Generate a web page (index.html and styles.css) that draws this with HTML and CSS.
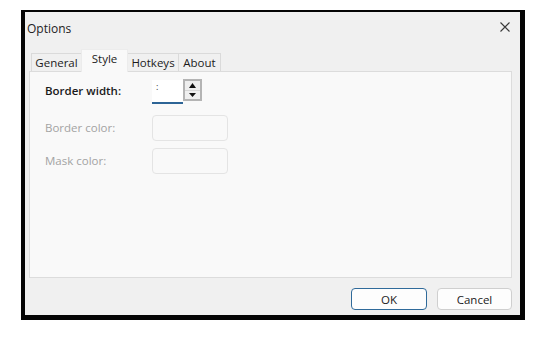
FILE: index.html
```html
<!DOCTYPE html>
<html>
<head>
<meta charset="utf-8">
<link rel="stylesheet" href="styles.css">
</head>
<body>
<div class="window">
  <div class="inner">
    <div class="titlebar">
      <span class="title">Options</span>
      <svg class="close" width="10" height="10" viewBox="0 0 10 10"><path d="M0.5 0.5 L9.5 9.5 M9.5 0.5 L0.5 9.5" stroke="#3a3a3a" stroke-width="1.1" fill="none"/></svg>
    </div>
    <div class="tabs">
      <div class="tab t-general">General</div>
      <div class="tab active t-style">Style</div>
      <div class="tab t-hotkeys">Hotkeys</div>
      <div class="tab t-about">About</div>
    </div>
    <div class="panel">
      <div class="form">
        <div class="label strong">Border width:</div>
        <div class="spinner">
          <div class="spin-text">:</div>
          <div class="spin-btns">
            <div class="spin-btn"><svg width="7" height="5" viewBox="0 0 7 5"><path d="M3.5 0 L7 5 L0 5 Z" fill="#111"/></svg></div>
            <div class="spin-btn"><svg width="7" height="4" viewBox="0 0 7 4"><path d="M0 0 L7 0 L3.5 4 Z" fill="#111"/></svg></div>
          </div>
        </div>
        <div class="label dim">Border color:</div>
        <div class="colorbox"></div>
        <div class="label dim">Mask color:</div>
        <div class="colorbox"></div>
      </div>
    </div>
    <div class="footer">
      <button class="btn primary">OK</button>
      <button class="btn">Cancel</button>
    </div>
  </div>
</div>
</body>
</html>
```
FILE: styles.css
```css
html, body {
  margin: 0;
  padding: 0;
  background: #ffffff;
  font-family: "Open Sans", "Noto Sans", sans-serif;
  font-size: 11px;
  color: #1b1b1b;
}
.window {
  margin: 10px 0 0 21px;
  width: 504px;
  height: 310px;
  box-sizing: border-box;
  background: #050505;
  padding: 2px 5px 5px 4px;
}
.inner {
  background: #f0f0f0;
  height: 100%;
  display: flex;
  flex-direction: column;
  padding: 0 8px 0 4px;
  box-sizing: border-box;
}
.titlebar {
  height: 37px;
  display: flex;
  align-items: flex-start;
  justify-content: space-between;
  box-sizing: border-box;
  padding-top: 9px;
  margin-left: -2px;
}
.title {
  font-size: 12px;
  color: #222;
  line-height: 16px;
}
.close {
  margin-top: 1px;
  margin-right: 2px;
}
.tabs {
  height: 22px;
  display: flex;
  align-items: flex-end;
  padding-left: 2px;
}
.tab {
  height: 18px;
  box-sizing: border-box;
  border: 1px solid #dadada;
  border-bottom: none;
  background: #f0f0f0;
  line-height: 17px;
  text-align: center;
  font-size: 11.5px;
  color: #1b1b1b;
  margin-right: -1px;
}
.tab.active {
  height: 23px;
  margin-bottom: -1px;
  background: #f9f9f9;
  border-color: #ececec;
  line-height: 18px;
  position: relative;
  z-index: 1;
  padding-bottom: 4px;
}
.t-general { width: 51px; }
.t-style { width: 47px; }
.t-hotkeys { width: 52px; }
.t-about { width: 43px; }
.panel {
  height: 207px;
  box-sizing: border-box;
  background: #f9f9f9;
  border: 1px solid #dcdcdc;
  padding: 6px 0 0 15px;
}
.form {
  display: grid;
  grid-template-columns: 107px auto;
  grid-template-rows: 26px 37px 33px;
  align-items: end;
}
.label {
  font-size: 11.5px;
  height: 26px;
  line-height: 26px;
}
.label.strong {
  font-weight: 600;
  color: #1a1a1a;
}
.label.dim {
  color: #a3a3a3;
}
.spinner {
  display: flex;
  height: 26px;
  align-items: flex-start;
}
.spin-text {
  width: 31px;
  box-sizing: border-box;
  margin-top: 2px;
  height: 24px;
  background: #ffffff;
  border-bottom: 2px solid #2d6496;
  font-size: 9px;
  line-height: 14px;
  padding-left: 4px;
  color: #333;
}
.spin-btns {
  width: 19px;
  box-sizing: border-box;
  margin-top: 1px;
  border: 2px solid #b4b4b4;
  display: flex;
  flex-direction: column;
  background: #d6d6d6;
  height: 22px;
  gap: 1px;
}
.spin-btn {
  flex: 1;
  background: #efefef;
  display: flex;
  align-items: center;
  justify-content: center;
}
.colorbox {
  width: 76px;
  height: 26px;
  box-sizing: border-box;
  border: 1px solid #e4e4e4;
  border-radius: 4px;
  background: #f9f9f9;
}
.footer {
  display: flex;
  justify-content: flex-end;
  gap: 10px;
  padding-top: 10px;
}
.btn {
  font-family: "Open Sans", "Noto Sans", sans-serif;
  font-size: 11.5px;
  height: 22px;
  width: 75px;
  border: 1px solid #cfcfcf;
  border-radius: 4px;
  background: #fdfdfd;
  color: #1b1b1b;
  padding: 0;
}
.btn.primary {
  width: 76px;
  border-color: #2f6a9a;
}
```
